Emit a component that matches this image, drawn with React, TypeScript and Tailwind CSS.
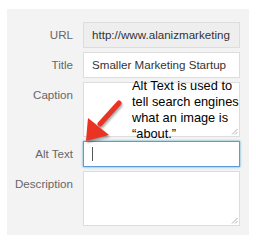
import React from "react";

const Grip: React.FC = () => (
  <svg className="absolute right-[1px] bottom-[1px]" width="7" height="7" viewBox="0 0 7 7">
    <path d="M6.5 1 L1 6.5 M6.5 4 L4 6.5" stroke="#999" strokeWidth="0.8" />
  </svg>
);

const Label: React.FC<{ text: string; top?: boolean }> = ({ text, top }) => (
  <div
    className={
      "text-right text-[11.6px] text-[#666] leading-[14px] " +
      (top ? "pt-[6px]" : "self-center")
    }
  >
    {text}
  </div>
);

const App: React.FC = () => {
  return (
    <div className="w-[256px] h-[246px] bg-white relative font-['Liberation_Sans',Arial,sans-serif]">
      <div className="absolute left-[7px] top-[9px] w-[242px] h-[226px] bg-[#f3f3f3] pt-[13px]">
        <div className="grid grid-cols-[66px_157px] gap-x-[10px] gap-y-[4px]">
          <Label text="URL" />
          <div className="h-[26px] bg-[#eeeeee] border border-[#dddddd] px-[8px] flex items-center text-[11.6px] text-[#333] overflow-hidden whitespace-nowrap">
            http://www.alanizmarketing
          </div>

          <Label text="Title" />
          <div className="h-[26px] bg-white border border-[#dddddd] px-[8px] flex items-center text-[11.6px] text-[#333] whitespace-nowrap">
            Smaller Marketing Startup
          </div>

          <Label text="Caption" top />
          <div className="h-[55px] bg-white border border-[#dddddd] relative">
            <Grip />
          </div>

          <Label text="Alt Text" />
          <div className="h-[26px] bg-white border border-[#5b9dd9] shadow-[0_0_2px_rgba(30,140,190,0.8)] px-[8px] flex items-center">
            <div className="w-[1px] h-[14px] bg-[#555]" />
          </div>

          <Label text="Description" top />
          <div className="h-[55px] bg-white border border-[#dddddd] relative">
            <Grip />
          </div>
        </div>
      </div>

      {/* annotation overlay */}
      <div className="absolute left-[132px] top-[78px] text-[12.8px] leading-[16px] text-black">
        <div>Alt Text is used to</div>
        <div>tell search engines</div>
        <div>what an image is</div>
        <div>“about.”</div>
      </div>

      <svg
        className="absolute left-0 top-0 drop-shadow-[1px_2px_1px_rgba(0,0,0,0.35)]"
        width="256"
        height="246"
        viewBox="0 0 256 246"
      >
        <path d="M119 103 L100 124" stroke="#ea3323" strokeWidth="5" strokeLinecap="round" />
        <polygon points="86,141 88,118 109,135" fill="#ea3323" />
      </svg>
    </div>
  );
};

export default App;
